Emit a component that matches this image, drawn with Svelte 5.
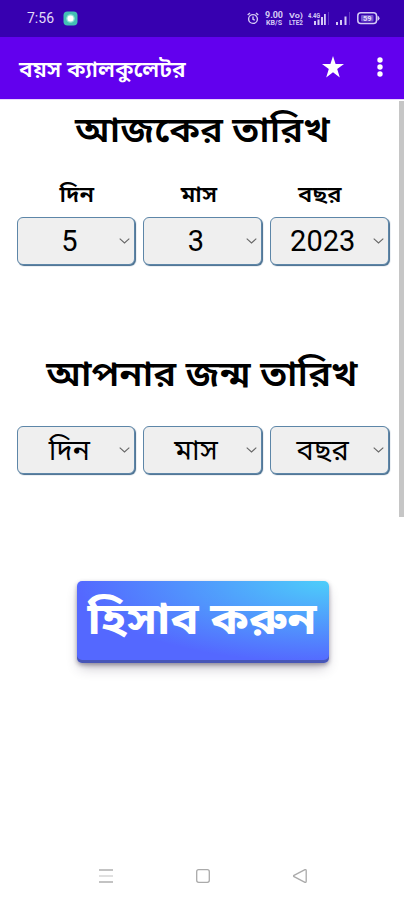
<script>
  const today = [
    { label: 'দিন', value: '5' },
    { label: 'মাস', value: '3' },
    { label: 'বছর', value: '2023' }
  ];
  const birth = ['দিন', 'মাস', 'বছর'];
</script>

{#snippet box(value)}
  <div class="select">
    <span class="value">{value}</span>
    <svg class="chevron" width="11" height="6" viewBox="0 0 11 6"><path d="M.7.7 5.5 5 10.3.7" /></svg>
  </div>
{/snippet}

<div class="screen">
  <div class="status">
    <span class="clock">7:56</span>
    <svg class="app-dot" width="15" height="15" viewBox="0 0 15 15">
      <rect x=".5" y=".5" width="14" height="14" rx="4" fill="#43bfb4" />
      <circle cx="7.5" cy="7.5" r="4.3" fill="#91e0d8" />
      <circle cx="7.5" cy="7.5" r="3" fill="#fff" />
    </svg>
    <div class="tray">
      <svg width="12" height="13" viewBox="0 0 12 13" fill="none" stroke="#d5cbf5" stroke-width="1.4">
        <circle cx="6" cy="7" r="4.4" /><path d="M.7 3 3 1M11.3 3 9 1M6 4.6V7.3l1.8.8" />
      </svg>
      <svg class="speed" width="18" height="16" viewBox="0 0 18 16" fill="#d5cbf5" font-weight="700">
        <text x="0" y="7.4" font-size="8.5" textLength="18" lengthAdjust="spacingAndGlyphs">9.00</text>
        <text x="1" y="14" font-size="7" textLength="16" lengthAdjust="spacingAndGlyphs">KB/S</text>
      </svg>
      <svg class="volte" width="15" height="16" viewBox="0 0 15 16" fill="#d5cbf5" font-weight="700">
        <text x="0" y="7.4" font-size="7.5" textLength="14" lengthAdjust="spacingAndGlyphs">Vo)</text>
        <text x="0" y="14" font-size="7" textLength="14" lengthAdjust="spacingAndGlyphs">LTE2</text>
      </svg>
      <svg class="sig1" width="21" height="13" viewBox="0 0 21 13" fill="#d5cbf5">
        <text x="0" y="5.5" font-size="6.5" font-weight="700" textLength="12" lengthAdjust="spacingAndGlyphs">4.4G</text>
        <path d="M6 9h2v4H6zM9.5 7.5h2V13h-2zM13 5h2v8h-2zM16 2h1.8v11H16z" />
        <path d="M20 0h.8v13H20z" opacity=".35" />
      </svg>
      <svg class="sig2" width="14" height="13" viewBox="0 0 14 13" fill="#d5cbf5">
        <path d="M0 10h2v3H0zM4 8h2v5H4zM8.5 4.5h2V13h-2z" />
        <path d="M13 0h.8v13H13z" opacity=".35" />
      </svg>
      <svg class="battery" width="23" height="13" viewBox="0 0 23 13">
        <rect x=".8" y=".8" width="18.7" height="10.8" rx="3" fill="none" stroke="#d5cbf5" stroke-width="1.5" />
        <path d="M20.5 3.5q2 1 2 2.7t-2 2.7z" fill="#d5cbf5" />
        <rect x="4" y="3" width="12.5" height="6.5" rx="1" fill="#7657d0" />
        <text x="6" y="9" font-size="7.5" font-weight="700" fill="#e1d9fa">59</text>
      </svg>
    </div>
  </div>

  <header>
    <h1><span>বয়স ক্যালকুলেটর</span></h1>
    <svg class="star" width="22" height="22" viewBox="0 0 22 22" fill="#fff">
      <path d="m11 0 2.6 8H22l-6.8 5 2.6 8.4L11 16.3l-6.8 5.1L6.8 13 0 8h8.4z" />
    </svg>
    <svg class="more" width="6" height="20" viewBox="0 0 6 20" fill="#fff">
      <circle cx="3" cy="3" r="2.7" /><circle cx="3" cy="10" r="2.7" /><circle cx="3" cy="17" r="2.7" />
    </svg>
  </header>

  <main>
    <h2 class="first">আজকের তারিখ</h2>
    <div class="row labels">
      {#each today as item}<span>{item.label}</span>{/each}
    </div>
    <div class="row">
      {#each today as item}{@render box(item.value)}{/each}
    </div>
    <h2 class="second">আপনার জন্ম তারিখ</h2>
    <div class="row">
      {#each birth as item}{@render box(item)}{/each}
    </div>
    <button><span>হিসাব করুন</span></button>
    <i class="scrollbar"></i>
  </main>

  <nav>
    <svg width="16" height="16" viewBox="0 0 16 16" fill="none" stroke="#b0b0b0" stroke-width="1.3">
      <path d="M1 2h14M1 14h14" /><path d="M1 8h14" stroke="#d0d0d0" />
    </svg>
    <svg width="16" height="16" viewBox="0 0 16 16" fill="none" stroke="#aaa" stroke-width="1.3">
      <rect x="1.7" y="1.7" width="12.6" height="12.6" rx="2" />
    </svg>
    <svg width="16" height="16" viewBox="0 0 16 16" fill="none" stroke="#aaa" stroke-width="1.3" stroke-linejoin="round">
      <path d="M2 7.3 13 1.7q1.2-.3 1.2 1v10.6q0 1.3-1.2 1L2 8.7q-.9-.7 0-1.4z" />
    </svg>
  </nav>
</div>

<style>
  :global(body) { margin: 0; background: #fff; }
  .screen {
    width: 404px; height: 900px; display: flex; flex-direction: column;
    overflow: hidden; background: #fff; color: #000;
    font-family: Roboto, "Noto Sans Bengali", "Noto Sans", sans-serif;
  }
  svg { display: block; flex: none; }
  .status {
    height: 37px; flex: none; box-sizing: border-box; padding-left: 27px;
    display: flex; align-items: center; background: #3700b0; color: #e2dbf8;
  }
  .clock { width: 36px; font-size: 14px; line-height: 37px; }
  .tray { display: flex; align-items: center; margin-left: 169px; }
  .speed { margin-left: 6px; }
  .volte { margin-left: 6px; }
  .sig1 { margin-left: 4px; }
  .sig2 { margin-left: 7px; }
  .battery { margin-left: 7px; }
  header {
    height: 61.5px; flex: none; box-sizing: border-box; padding: 0 21px 0 19px;
    display: flex; align-items: center; background: #6200ee; color: #fff;
    border-bottom: 1px solid #6200ee; box-shadow: 0 1px 0 #ead6fc;
  }
  h1 { margin: 6px 0 0; font-size: 21.5px; font-weight: 600; line-height: 40px; white-space: nowrap; width: 303px; }
  h1 span { display: inline-block; transform: scaleX(1.06); transform-origin: left; }
  .star { margin-right: 33px; }
  .more { margin-right: -1px; }
  main { position: relative; height: 753px; flex: none; display: flex; flex-direction: column; align-items: center; }
  h2 { margin: 0; font-size: 35.5px; font-weight: 600; line-height: 50px; height: 50px; white-space: nowrap; transform: scaleX(1.075); }
  .first { margin-top: 6px; }
  .row { width: 372px; display: flex; gap: 8px; margin-left: 1px; }
  .labels { width: 365px; gap: 0; height: 30px; margin: 25px 7px 7px 0; font-weight: 600; font-size: 22px; line-height: 30px; }
  .labels span { flex: 1; text-align: center; transform: scaleX(1.08); }
  .select {
    flex: 1; height: 48px; box-sizing: border-box; padding-right: 13px;
    position: relative; display: flex; align-items: center; justify-content: center;
    background: #efefef; border: 1px solid #5d86a8; border-radius: 6px;
    box-shadow: 1px 1px 1px #42698b;
  }
  .value { font-size: 29px; line-height: 46px; white-space: nowrap; }
  .chevron { position: absolute; right: 4px; top: 20px; fill: none; stroke: #666; stroke-width: 1.1; }
  .second { margin: 84px 0 27px; }
  button {
    width: 252px; height: 82px; flex: none; margin: 107px 0 0 1px; padding: 2px 0 0; border: 0; border-radius: 5px;
    color: #fff; font: 700 44px Roboto, "Noto Sans Bengali", "Noto Sans", sans-serif; white-space: nowrap;
    background: radial-gradient(100% 100% at 100% 0, #4dcefa 0, #5468ff 100%);
    box-shadow: rgba(45, 35, 66, .4) 0 2px 4px, rgba(45, 35, 66, .3) 0 7px 13px -3px, rgba(58, 65, 111, .5) 0 -3px 0 inset;
  }
  button span { display: inline-block; transform: scaleX(1.07); }
  .scrollbar { position: absolute; top: 2px; right: 0; width: 5px; height: 416px; background: #c6c6c6; }
  nav { display: flex; justify-content: center; gap: 81px; padding-top: 16px; margin-left: 1px; }
</style>
